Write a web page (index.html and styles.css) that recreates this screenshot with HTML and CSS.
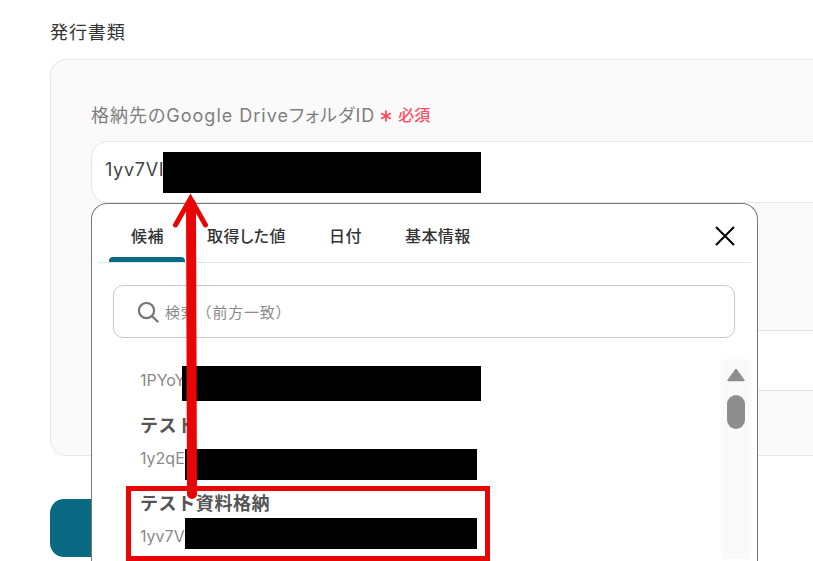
FILE: index.html
```html
<!DOCTYPE html>
<html lang="ja">
<head>
<meta charset="utf-8">
<title>発行書類</title>
<link rel="stylesheet" href="styles.css">
</head>
<body>
<main class="page">
  <h2 class="section-title">発行書類</h2>
  <section class="card">
    <div class="label-row">
      <span class="label">格納先のGoogle DriveフォルダID</span>
      <svg class="req-star" viewBox="0 0 12 12" width="12" height="12"><path d="M6 0.500V11.500M1.200 3.200L10.800 8.800M10.800 3.200L1.200 8.800" stroke="#ff4d63" stroke-width="1.800" fill="none"/></svg>
      <span class="req-text">必須</span>
    </div>
    <div class="field">1yv7VI</div>
    <div class="card-gap"></div>
    <div class="row-band"></div>
  </section>
  <div class="submit"></div>
</main>

<div class="popup">
  <div class="tabs">
    <span class="tab tab-active">候補</span>
    <span class="tab tab-values">取得した値</span>
    <span class="tab tab-date">日付</span>
    <span class="tab tab-info">基本情報</span>
    <svg class="close" viewBox="0 0 20 20" width="20" height="20"><path d="M1 1L19 19M19 1L1 19" stroke="#000" stroke-width="2" fill="none"/></svg>
  </div>
  <div class="search">
    <svg class="search-icon" viewBox="0 0 22 22" width="22" height="22"><circle cx="9.500" cy="9.500" r="7.600" stroke="#777" stroke-width="2.200" fill="none"/><path d="M15 15L20.500 20.500" stroke="#777" stroke-width="2.400" stroke-linecap="round"/></svg>
    <span class="placeholder">検索（前方一致）</span>
  </div>
  <div class="list-wrap">
    <div class="list">
      <div class="item-id first">1PYoY</div>
      <div class="item-name">テスト</div>
      <div class="item-id">1y2qE</div>
      <div class="item-name">テスト資料格納</div>
      <div class="item-id">1yv7V</div>
    </div>
    <div class="scrollbar">
      <svg class="scroll-up" viewBox="0 0 18 14" width="18" height="14"><path d="M9 1.500L17 12.500H1Z" fill="#8e8e8e" stroke="#8e8e8e" stroke-width="1.500" stroke-linejoin="round"/></svg>
      <div class="thumb"></div>
    </div>
  </div>
</div>

<div class="mask mask-field"></div>
<div class="mask mask-a"></div>
<div class="mask mask-b"></div>
<div class="mask mask-c"></div>
<div class="highlight"></div>
<svg class="arrow" viewBox="0 0 813 561" width="813" height="561">
  <path d="M191 204L192 494" stroke="#e90505" stroke-width="10" stroke-linecap="round" fill="none"/>
  <path d="M175.500 225L190.500 198.500L205.500 225" stroke="#e90505" stroke-width="5" stroke-linecap="round" stroke-linejoin="miter" fill="none"/>
</svg>
</body>
</html>
```
FILE: styles.css
```css
* { box-sizing: border-box; }
html, body { margin: 0; width: 813px; height: 561px; overflow: hidden; }
body {
  position: relative;
  background: #fff;
  font-family: Inter, "Noto Sans CJK JP", sans-serif;
  font-feature-settings: "palt";
}
.page { padding: 21px 0 0 50px; width: 813px; height: 561px; overflow: hidden; }
.section-title {
  margin: 0 0 14px;
  font-size: 18px;
  line-height: 24px;
  font-weight: 400;
  letter-spacing: 0.9px;
  color: #333;
}
.card {
  width: 950px;
  height: 397px;
  padding: 42px 0 0 40px;
  background: #fafafa;
  border: 1px solid #e6e6e6;
  border-radius: 16px;
}
.label-row { display: flex; align-items: center; height: 24px; }
.label { font-size: 18px; letter-spacing: 1px; color: #7f7f7f; font-weight: 400; }
.req-star { margin-left: 5px; margin-top: 3px; flex: none; }
.req-text { margin-left: 6px; font-size: 16px; color: #ff4d63; font-weight: 500; }
.field {
  margin-top: 15px;
  height: 62px;
  padding-left: 13px;
  background: #fff;
  border: 1px solid #e6e6e6;
  border-radius: 16px 0 0 16px;
  font-size: 18px;
  line-height: 56px;
  letter-spacing: 0.7px;
  color: #444;
}
.card-gap { height: 127px; }
.row-band { height: 61px; background: #fff; border-top: 1px solid #e3e3e3; border-bottom: 1px solid #e3e3e3; }
.submit { margin-top: 43px; width: 400px; height: 58px; border-radius: 14px; background: #0a6a84; }

.popup {
  position: absolute;
  left: 91px;
  top: 203px;
  width: 667px;
  height: 358px;
  padding: 0 6px;
  background: #fff;
  border: 1px solid #777;
  border-bottom: 0;
  border-radius: 16px 16px 0 0;
}
.tabs { position: relative; height: 59px; border-bottom: 1px solid #e5e5e5; }
.tab { position: absolute; top: 20px; font-size: 16px; line-height: 24px; letter-spacing: 0.4px; font-weight: 500; color: #333; }
.tab-active { left: 33px; }
.tab-active::after { content: ""; position: absolute; left: -22px; top: 33px; width: 76px; height: 5px; background: #0a6a84; border-radius: 4px 4px 0 0; }
.tab-values { left: 109px; }
.tab-date { left: 231px; }
.tab-info { left: 307px; }
.close { position: absolute; left: 617px; top: 22px; }
.search {
  display: flex;
  align-items: center;
  margin: 22px 16px 0 15px;
  height: 53px;
  padding-left: 23px;
  border: 1px solid #c8c8c8;
  border-radius: 10px;
}
.search-icon { flex: none; }
.placeholder { margin-left: 6px; font-size: 15px; letter-spacing: 0.8px; color: #8a8a8a; font-feature-settings: normal; }
.list-wrap { display: flex; justify-content: space-between; margin-top: 21px; }
.list { padding-left: 42px; }
.item-id { font-size: 16px; line-height: 22px; color: #8a8a8a; }
.item-id.first { margin-top: 10px; }
.item-name { font-size: 18px; line-height: 24px; font-weight: 700; color: #555; margin-top: 23px; letter-spacing: 0.6px; font-feature-settings: normal; }
.item-name + .item-id { margin-top: 9px; }
.scrollbar { width: 30px; height: 200px; background: #fafafa; padding: 9px 6px 0; }
.scroll-up { display: block; }
.thumb { margin-top: 13px; width: 18px; height: 34px; border-radius: 9px; background: #8e8e8e; }

.mask { position: absolute; background: #000; }
.mask-field { left: 163px; top: 152px; width: 318px; height: 41px; }
.mask-a { left: 182px; top: 366px; width: 299px; height: 35px; }
.mask-b { left: 185px; top: 449px; width: 292px; height: 31px; }
.mask-c { left: 185px; top: 518px; width: 292px; height: 31px; }
.highlight { position: absolute; left: 126px; top: 486px; width: 364px; height: 75px; border: 5px solid #e90505; }
.arrow { position: absolute; left: 0; top: 0; }
```
